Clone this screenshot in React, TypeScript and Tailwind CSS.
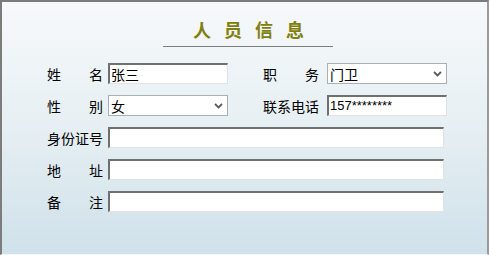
import React from 'react';

const font = { fontFamily: '"SimSun", "Noto Sans CJK SC", sans-serif' };

function Label({ chars }: { chars: string[] }) {
  return (
    <div className="w-[56px] flex justify-between text-[14px] leading-none text-black">
      {chars.map((c, i) => (
        <span key={i}>{c}</span>
      ))}
    </div>
  );
}

function TextBox({ value, wide, mono }: { value?: string; wide?: boolean; mono?: boolean }) {
  return (
    <div
      className={`h-[21px] bg-white border-t-2 border-l-2 border-t-[#707070] border-l-[#707070] border-r border-b border-r-[#e2e2e2] border-b-[#e2e2e2] flex items-center pl-[1px] ${
        wide ? 'w-[336px]' : 'w-[120px]'
      }`}
    >
      {mono ? (
        <span className="text-[13px] text-black font-['Liberation_Sans',sans-serif]">{value}</span>
      ) : (
        <span className="text-[14px] leading-none text-black">{value}</span>
      )}
    </div>
  );
}

function Select({ value }: { value: string }) {
  return (
    <div className="h-[21px] w-[120px] bg-white border border-[#a9b0b5] flex items-center justify-between pl-[2px] pr-[4px]">
      <span className="text-[14px] leading-none text-black">{value}</span>
      <svg width="9" height="6" viewBox="0 0 9 6">
        <path d="M1 1 L4.5 4.5 L8 1" fill="none" stroke="#5c5c5c" strokeWidth="1.8" />
      </svg>
    </div>
  );
}

export default function App() {
  return (
    <div
      className="w-[489px] h-[255px] bg-gradient-to-b from-[#f7f9fb] via-[#e6eff3] to-[#cfe1ea] border-t-2 border-l-2 border-t-[#7c7c7c] border-l-[#7c7c7c] border-r-2 border-r-[#9a9a9a] border-b border-b-[#f2f6f8] flex flex-col"
      style={font}
    >
      {/* Title */}
      <div className="flex flex-col items-center pt-[18px] pl-[8px]">
        <div className="text-[18px] leading-none font-bold text-[#80800f] tracking-[13px] pl-[13px]">人员信息</div>
        <div className="mt-[8px] w-[170px] h-px bg-[#7d7d7d] ml-[-2px]"></div>
      </div>

      {/* Form */}
      <div className="flex flex-col pl-[45px] pt-[16px] gap-[11px]">
        <div className="flex items-center">
          <div className="flex items-center gap-[5px]">
            <Label chars={['姓', '名']} />
            <TextBox value="张三" />
          </div>
          <div className="flex items-center gap-[8px] ml-[35px]">
            <Label chars={['职', '务']} />
            <Select value="门卫" />
          </div>
        </div>
        <div className="flex items-center">
          <div className="flex items-center gap-[5px]">
            <Label chars={['性', '别']} />
            <Select value="女" />
          </div>
          <div className="flex items-center gap-[8px] ml-[35px]">
            <Label chars={['联', '系', '电', '话']} />
            <TextBox value="157********" mono />
          </div>
        </div>
        <div className="flex items-center gap-[5px]">
          <Label chars={['身', '份', '证', '号']} />
          <TextBox wide />
        </div>
        <div className="flex items-center gap-[5px]">
          <Label chars={['地', '址']} />
          <TextBox wide />
        </div>
        <div className="flex items-center gap-[5px]">
          <Label chars={['备', '注']} />
          <TextBox wide />
        </div>
      </div>
    </div>
  );
}
